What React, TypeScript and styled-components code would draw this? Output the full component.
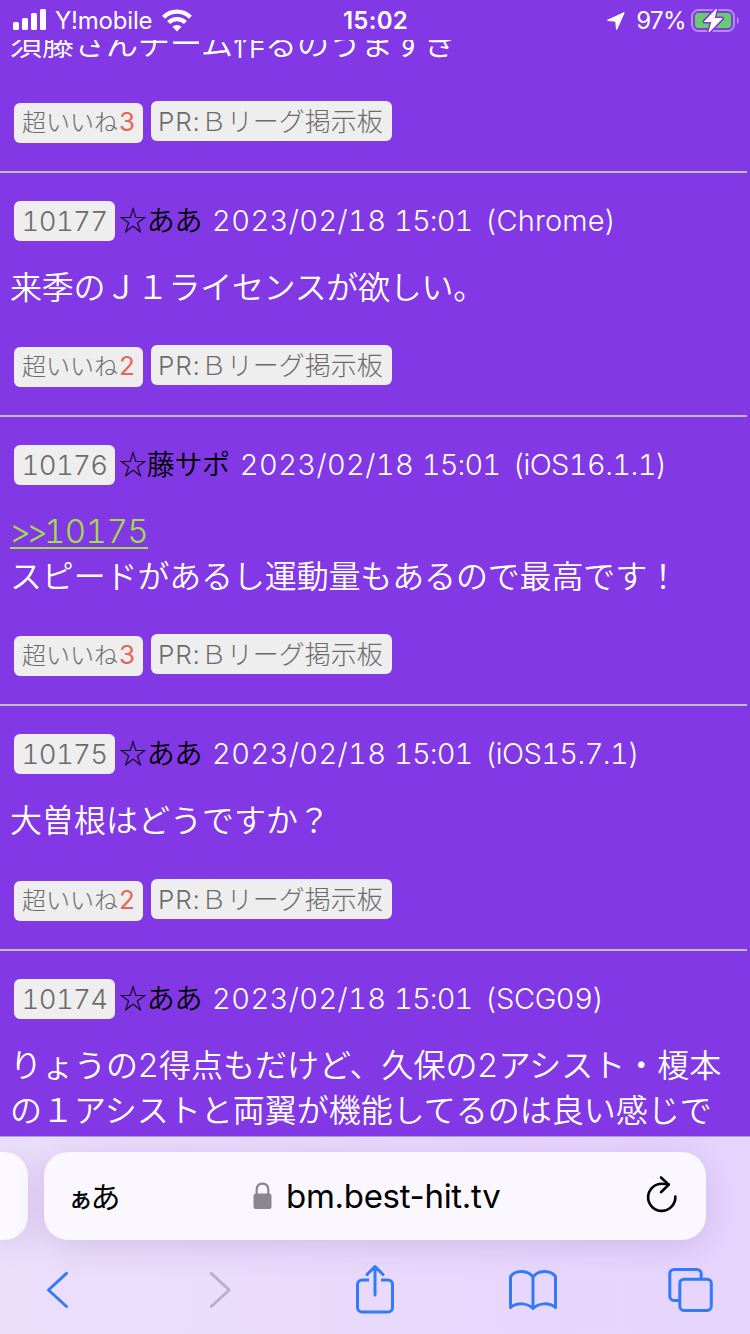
import React from "react";
import styled, { createGlobalStyle } from "styled-components";

const GlobalStyle = createGlobalStyle`
  * { box-sizing: border-box; }
  html, body { margin: 0; padding: 0; background: #8338e6; }
`;

const cjk = `"Noto Sans CJK JP", sans-serif`;

const Screen = styled.div`
  width: 750px;
  height: 1334px;
  display: flex;
  flex-direction: column;
  overflow: hidden;
  background: #8338e6;
  color: #fff;
  font-family: Inter, ${cjk};
  font-weight: 300;
`;

const StatusBar = styled.header`
  flex: none;
  height: 40px;
  display: grid;
  grid-template-columns: 1fr auto 1fr;
  align-items: center;
  padding: 0 11px 0 13px;
  font-size: 24px;
  font-weight: 400;
  line-height: 40px;
`;

const StatusSide = styled.div<{ $end?: boolean }>`
  display: flex;
  align-items: center;
  justify-content: ${(p) => (p.$end ? "flex-end" : "flex-start")};
  svg { display: block; flex: none; }
`;

const Carrier = styled.span`
  margin: 1px 10px 0 8px;
  letter-spacing: -0.2px;
`;

const Clock = styled.time`
  font-weight: 600;
  letter-spacing: 0.3px;
  padding: 1px 1px 0 0;
`;

const Percent = styled.span`
  margin: 1px 5px 0 11px;
  letter-spacing: -0.6px;
`;

const Feed = styled.main`
  flex: 1;
  min-height: 0;
  overflow: hidden;
`;

const Post = styled.article<{ $cut?: boolean }>`
  width: 747px;
  padding: 28px 0 30px;
  border-bottom: 2px solid #bdbdbd;
  ${(p) => p.$cut && "margin-top: -21.2px; padding-top: 0;"}
`;

const PostHead = styled.div`
  display: flex;
  align-items: center;
  height: 40px;
  margin-bottom: 22px;
  padding-left: 14px;
  font-size: 29px;
  font-feature-settings: "tnum" 1, "calt" 0;
  white-space: pre;
`;

const Tag = styled.span`
  flex: none;
  height: 40px;
  border-radius: 6px;
  background: #eee;
  color: #6b6b6b;
  white-space: nowrap;
  overflow: hidden;
`;

const NumberTag = styled(Tag)`
  width: 101px;
  font-size: 27.5px;
  line-height: 41px;
  text-align: center;
  letter-spacing: -0.6px;
`;

const Author = styled.span`
  color: #000;
  margin-left: 4px;
  padding-bottom: 3px;
  font-family: ${cjk};
  font-size: 28px;
  font-weight: 350;
  letter-spacing: -0.3px;
  line-height: 37px;
`;

const PostDate = styled.span`
  flex: none;
  margin-left: 10px;
  width: 182px;
  line-height: 40px;
  letter-spacing: 0.4px;
`;

const PostTime = styled.span`
  flex: none;
  width: 81px;
  line-height: 40px;
  letter-spacing: -0.9px;
`;

const Agent = styled.span<{ $spacing: number }>`
  margin-left: 10px;
  line-height: 40px;
  letter-spacing: ${(p) => p.$spacing}px;
`;

const Body = styled.p<{ $tracking: number }>`
  margin: 0 0 37.2px;
  padding-left: 10px;
  font-family: ${cjk};
  font-size: 32px;
  font-weight: 350;
  line-height: 45px;
  letter-spacing: ${(p) => p.$tracking}px;
  white-space: nowrap;
`;

const Digit = styled.span`
  font-family: Inter, sans-serif;
  font-weight: 300;
  font-size: 33px;
  line-height: 0;
  letter-spacing: 0.8px;
`;

const Quote = styled.a`
  font-family: Inter, sans-serif;
  font-weight: 300;
  color: #a0e040;
  line-height: 0;
  letter-spacing: -0.5px;
  font-size: 33px;
  text-decoration: underline;
  text-decoration-thickness: 2px;
  text-underline-offset: 4px;
  font-feature-settings: "tnum" 1, "calt" 0;
`;

const Arrows = styled.span`
  letter-spacing: -4.4px;
`;

const Actions = styled.div`
  display: flex;
  gap: 8px;
  height: 40px;
  padding-left: 14px;
`;

const Like = styled(Tag)`
  width: 129px;
  margin-top: 2px;
  padding-left: 8px;
  font-family: ${cjk};
  font-size: 24px;
  line-height: 36px;
`;

const Count = styled.span`
  margin-left: 1px;
  font-family: Inter, sans-serif;
  font-size: 26px;
  line-height: 0;
  font-weight: 400;
  color: #e4665f;
`;

const Promo = styled(Tag)`
  width: 241px;
  padding-left: 7px;
  font-family: Inter, ${cjk};
  font-size: 26px;
  line-height: 41px;
`;

const Prefix = styled.span`
  letter-spacing: 0.9px;
`;

const BrowserBar = styled.footer`
  flex: none;
  height: 198px;
  border-top: 1px solid #b49bcf;
  background: linear-gradient(90deg, #ecdffc, #e6d4fd);
  padding-top: 15px;
`;

const Tabs = styled.div`
  display: flex;
  gap: 16px;
  height: 88px;
`;

const PreviousTab = styled.div`
  width: 28px;
  border-radius: 0 24px 24px 0;
  background: #fbf8ff;
  box-shadow: 0 6px 32px rgba(80, 40, 130, 0.16);
`;

const AddressBar = styled.div`
  width: 662px;
  border-radius: 24px;
  background: #faf7fe;
  box-shadow: 0 6px 32px rgba(80, 40, 130, 0.16);
  color: #000;
  display: flex;
  align-items: center;
  padding: 0 27px 0 25px;
  svg { display: block; flex: none; }
`;

const ReaderButton = styled.span`
  width: 184px;
  font-family: ${cjk};
  font-weight: 400;
  font-size: 30px;
  letter-spacing: -2.5px;
  line-height: 60px;
  text-indent: -1px;
  small { font-size: 25px; font-weight: 500; }
`;

const Domain = styled.span`
  flex: 1;
  margin-left: 14px;
  font-weight: 400;
  font-size: 33px;
  letter-spacing: -0.3px;
`;

const Toolbar = styled.nav`
  display: flex;
  justify-content: space-between;
  align-items: center;
  height: 60px;
  margin-top: 19px;
  padding: 0 35px 0 32px;
  color: #327bf8;
  svg { display: block; }
`;

const SignalIcon = () => (
  <svg width="34" height="26" viewBox="0 0 34 26" fill="#fff">
    <rect x="0" y="14" width="6" height="8" rx="1.6" />
    <rect x="9" y="10" width="6" height="12" rx="1.6" />
    <rect x="18" y="5" width="6" height="17" rx="1.6" />
    <rect x="27" y="1" width="6" height="21" rx="1.6" />
  </svg>
);

const WifiIcon = () => (
  <svg width="30" height="24" viewBox="0 0 30 24" fill="none" stroke="#fff" strokeWidth="4.2">
    <path d="M1.600 8.200a19 19 0 0 1 26.800 0" />
    <path d="M6.600 13.600a12 12 0 0 1 16.800 0" />
    <path d="M15 22.500l-4.600-4.700a6.500 6.500 0 0 1 9.200 0z" fill="#fff" stroke="none" />
  </svg>
);

const LocationIcon = () => (
  <svg width="18" height="18" viewBox="0 0 18 18" fill="#fff" stroke="#fff" strokeWidth="1.300" strokeLinejoin="round">
    <path d="M17 .8L.8 8.300l8.100.9.7 8z" />
  </svg>
);

const BatteryIcon = () => (
  <svg width="48" height="26" viewBox="0 0 48 26">
    <rect x="1" y="2" width="42" height="21" rx="6.500" fill="none" stroke="#b78bf1" strokeWidth="2" />
    <path d="M46 9c2.500 1 2.500 6 0 7z" fill="#b78bf1" />
    <rect x="4" y="5" width="36" height="15" rx="3.500" fill="#65cf67" />
    <path d="M25.500 1L13.500 13.500h7.500L18 24l13-13.500h-8z" fill="#fff" stroke="#8338e6" strokeWidth="4" strokeLinejoin="round" />
    <path d="M25.500 1L13.500 13.500h7.500L18 24l13-13.500h-8z" fill="#fff" stroke="#fff" strokeWidth="1" strokeLinejoin="round" />
  </svg>
);

const LockIcon = () => (
  <svg width="19" height="28" viewBox="0 0 19 28">
    <path d="M3.700 13V8c0-4 2.300-6.400 5.800-6.400s5.800 2.400 5.800 6.400v5" fill="none" stroke="#8a8690" strokeWidth="2.200" />
    <rect x="0.500" y="11.500" width="18" height="15.500" rx="2.600" fill="#8a8690" />
  </svg>
);

const ReloadIcon = () => (
  <svg width="34" height="44" viewBox="0 0 34 44" fill="none" stroke="#000" strokeWidth="2.600" strokeLinecap="round" strokeLinejoin="round">
    <path d="M30.300 22.500A13.600 13.600 0 1 1 16.700 9.700q3.500 0 7 .8" />
    <path d="M16 3.500l7.800 7.100L16 18.200" />
  </svg>
);

const BackIcon = () => (
  <svg width="50" height="40" viewBox="-14 0 50 40" fill="none" stroke="currentColor" strokeWidth="3" strokeLinecap="round" strokeLinejoin="round">
    <path d="M20.500 4.300L2.500 21l18 16.500" />
  </svg>
);

const ForwardIcon = () => (
  <svg width="50" height="40" viewBox="-17.750 0 50 40" fill="none" stroke="#bbaeca" strokeWidth="3" strokeLinecap="round" strokeLinejoin="round">
    <path d="M3.500 4.300L21.500 21l-18 16.500" />
  </svg>
);

const ShareIcon = () => (
  <svg width="50" height="50" viewBox="-6 0 50 50" fill="none" stroke="currentColor" strokeWidth="3" strokeLinecap="round" strokeLinejoin="round">
    <path d="M14 16H7a4.500 4.500 0 0 0-4.500 4.500v23A4.500 4.500 0 0 0 7 48h26a4.500 4.500 0 0 0 4.500-4.500v-23A4.500 4.500 0 0 0 33 16h-7" strokeLinecap="butt" />
    <path d="M20 31V2.500M12 10.500l8-8 8 8" />
  </svg>
);

const BookIcon = () => (
  <svg width="50" height="42" viewBox="-1 -1 50 42" fill="none" stroke="currentColor" strokeWidth="3" strokeLinecap="round" strokeLinejoin="round">
    <path d="M25 39.500V8C20 1.200 8 .5 2.500 7.500v31c6.500-5 16.500-5 22.500 1 6-6 16-6 22.500-1v-31C42 .5 30 1.200 25 8" />
  </svg>
);

const TabsIcon = () => (
  <svg width="50" height="46" viewBox="-3 0 50 46" fill="none" stroke="currentColor" strokeWidth="3">
    <rect x="11.800" y="13.200" width="31.500" height="31.300" rx="4.200" />
    <path d="M33.200 13V7.800A4.200 4.200 0 0 0 29 3.500H6A4.200 4.200 0 0 0 1.800 7.700v22.600A4.200 4.200 0 0 0 6 34.500h6" />
  </svg>
);

type PostData = {
  no?: string;
  author?: string;
  agent?: string;
  spacing?: number;
  tracking?: number;
  quote?: string;
  lines: React.ReactNode[];
  likes: number;
};

const posts: PostData[] = [
  { lines: ["須藤さんチーム作るのうますぎ"], likes: 3 },
  { no: "10177", author: "☆ああ", agent: "(Chrome)", spacing: 0.1, tracking: -0.3, lines: ["来季のＪ１ライセンスが欲しい。"], likes: 2 },
  { no: "10176", author: "☆藤サポ", agent: "(iOS16.1.1)", spacing: -0.6, tracking: -0.15, quote: "10175", lines: ["スピードがあるし運動量もあるので最高です！"], likes: 3 },
  { no: "10175", author: "☆ああ", agent: "(iOS15.7.1)", spacing: -0.6, lines: ["大曽根はどうですか？"], likes: 2 },
  {
    no: "10174",
    author: "☆ああ",
    agent: "(SCG09)",
    spacing: -0.4,
    lines: [
      <>りょうの<Digit>2</Digit>得点もだけど、久保の<Digit>2</Digit>アシスト・榎本</>,
      "の１アシストと両翼が機能してるのは良い感じで",
    ],
    likes: 2,
  },
];

export default function App() {
  return (
    <Screen>
      <GlobalStyle />
      <StatusBar>
        <StatusSide>
          <SignalIcon />
          <Carrier>Y!mobile</Carrier>
          <WifiIcon />
        </StatusSide>
        <Clock>15:02</Clock>
        <StatusSide $end>
          <LocationIcon />
          <Percent>97%</Percent>
          <BatteryIcon />
        </StatusSide>
      </StatusBar>
      <Feed>
        {posts.map((post, i) => (
          <Post key={i} $cut={!post.no}>
            {post.no && (
              <PostHead>
                <NumberTag>{post.no}</NumberTag>
                <Author>{post.author}</Author>
                <PostDate>2023/02/18</PostDate>
                <PostTime>15:01</PostTime>
                <Agent $spacing={post.spacing ?? 0}>{post.agent}</Agent>
              </PostHead>
            )}
            <Body $tracking={post.tracking ?? 0}>
              {post.quote && (
                <>
                  <Quote><Arrows>&gt;&gt;</Arrows>{post.quote}</Quote>
                  <br />
                </>
              )}
              {post.lines.map((line, n) => (
                <React.Fragment key={n}>
                  {n > 0 && <br />}
                  {line}
                </React.Fragment>
              ))}
            </Body>
            <Actions>
              <Like>超いいね<Count>{post.likes}</Count></Like>
              <Promo><Prefix>PR:</Prefix>Ｂリーグ掲示板</Promo>
            </Actions>
          </Post>
        ))}
      </Feed>
      <BrowserBar>
        <Tabs>
          <PreviousTab />
          <AddressBar>
            <ReaderButton><small>ぁ</small>あ</ReaderButton>
            <LockIcon />
            <Domain>bm.best-hit.tv</Domain>
            <ReloadIcon />
          </AddressBar>
        </Tabs>
        <Toolbar>
          <BackIcon />
          <ForwardIcon />
          <ShareIcon />
          <BookIcon />
          <TabsIcon />
        </Toolbar>
      </BrowserBar>
    </Screen>
  );
}
